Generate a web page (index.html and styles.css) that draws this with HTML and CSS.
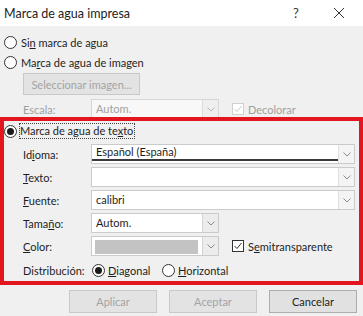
FILE: index.html
```html
<!DOCTYPE html>
<html lang="es">
<head>
    <meta charset="UTF-8">
    <title>Marca de agua impresa</title>
    <link rel="stylesheet" href="styles.css">
</head>
<body>
    <div class="dialog">
        <div class="titlebar">
            <span class="title">Marca de agua impresa</span>
            <span class="help">?</span>
            <span class="close">
                <svg width="12" height="12" viewBox="0 0 12 12"><path d="M1 1 L11 11 M11 1 L1 11" stroke="#333" stroke-width="1" fill="none"/></svg>
            </span>
        </div>

        <div class="content">
            <div class="radio-row first">
                <span class="radio"></span>
                <span>Si<u>n</u> marca de agua</span>
            </div>
            <div class="radio-row">
                <span class="radio"></span>
                <span>Ma<u>r</u>ca de agua de imagen</span>
            </div>
            <div class="image-row">
                <button class="btn btn-select" disabled>Seleccionar imagen...</button>
            </div>
            <div class="field-row scale-row">
                <span class="label disabled">Escala:</span>
                <div class="combo small disabled">
                    <span class="value">Autom.</span>
                    <span class="arrow"><svg width="8" height="5" viewBox="0 0 8 5"><path d="M0.5 0.5 L4 4 L7.5 0.5" stroke="#b5b5b5" fill="none"/></svg></span>
                </div>
                <span class="checkbox disabled">
                    <svg width="10" height="10" viewBox="0 0 10 10"><path d="M1.5 5 L4 7.5 L8.5 2" stroke="#c8c8c8" fill="none"/></svg>
                </span>
                <span class="check-text disabled">Decolorar</span>
            </div>

            <div class="text-section">
                <div class="radio-row text-option">
                    <span class="radio checked"></span>
                    <span class="focus">Marca de agua de te<u>x</u>to</span>
                </div>
                <div class="field-row">
                    <span class="label">Id<u>i</u>oma:</span>
                    <div class="combo wide focused">
                        <span class="value">Español (España)</span>
                        <span class="arrow"><svg width="8" height="5" viewBox="0 0 8 5"><path d="M0.5 0.5 L4 4 L7.5 0.5" stroke="#8a8a8a" fill="none"/></svg></span>
                    </div>
                </div>
                <div class="field-row">
                    <span class="label"><u>T</u>exto:</span>
                    <div class="combo wide">
                        <span class="value"></span>
                        <span class="arrow"><svg width="8" height="5" viewBox="0 0 8 5"><path d="M0.5 0.5 L4 4 L7.5 0.5" stroke="#8a8a8a" fill="none"/></svg></span>
                    </div>
                </div>
                <div class="field-row">
                    <span class="label"><u>F</u>uente:</span>
                    <div class="combo wide">
                        <span class="value">calibri</span>
                        <span class="arrow"><svg width="8" height="5" viewBox="0 0 8 5"><path d="M0.5 0.5 L4 4 L7.5 0.5" stroke="#8a8a8a" fill="none"/></svg></span>
                    </div>
                </div>
                <div class="field-row">
                    <span class="label">Tama<u>ñ</u>o:</span>
                    <div class="combo small">
                        <span class="value">Autom.</span>
                        <span class="arrow"><svg width="8" height="5" viewBox="0 0 8 5"><path d="M0.5 0.5 L4 4 L7.5 0.5" stroke="#8a8a8a" fill="none"/></svg></span>
                    </div>
                </div>
                <div class="field-row">
                    <span class="label"><u>C</u>olor:</span>
                    <div class="combo small color">
                        <span class="value"><span class="swatch"></span></span>
                        <span class="arrow"><svg width="8" height="5" viewBox="0 0 8 5"><path d="M0.5 0.5 L4 4 L7.5 0.5" stroke="#8a8a8a" fill="none"/></svg></span>
                    </div>
                    <span class="checkbox">
                        <svg width="10" height="10" viewBox="0 0 10 10"><path d="M1.5 5 L4 7.5 L8.5 2" stroke="#333" fill="none"/></svg>
                    </span>
                    <span class="check-text">S<u>e</u>mitransparente</span>
                </div>
                <div class="field-row layout-row">
                    <span class="label">Distribución:</span>
                    <span class="layout-option diagonal">
                        <span class="radio checked"></span>
                        <span><u>D</u>iagonal</span>
                    </span>
                    <span class="layout-option">
                        <span class="radio"></span>
                        <span><u>H</u>orizontal</span>
                    </span>
                </div>
            </div>

            <div class="buttons">
                <button class="btn" disabled>Aplicar</button>
                <button class="btn" disabled>Aceptar</button>
                <button class="btn">Cancelar</button>
            </div>
        </div>

        <!-- red annotation frame drawn over the dialog -->
        <div class="highlight"></div>
    </div>
</body>
</html>
```

FILE: styles.css
```css
* {
    box-sizing: border-box;
}

body {
    margin: 0;
    font-family: Lato, "Noto Sans", sans-serif;
    font-size: 11px;
    color: #1e1e1e;
    background: #f0f0f0;
}

.dialog {
    position: relative;
    width: 363px;
    height: 316px;
    background: #f0f0f0;
    overflow: hidden;
}

/* Title bar */
.titlebar {
    height: 26px;
    background: #fff;
    display: flex;
    align-items: center;
    padding-left: 4px;
    padding-right: 12px;
}

.title {
    flex: 1;
    font-size: 12.5px;
    color: #222;
}

.help {
    width: 20px;
    text-align: center;
    font-size: 13px;
    color: #333;
}

.close {
    width: 24px;
    margin-left: 21px;
    display: flex;
    justify-content: center;
    align-items: center;
}

/* Body */
.content {
    padding-left: 4px;
}

.radio-row {
    height: 20px;
    display: flex;
    align-items: center;
}

.radio-row.first {
    margin-top: 6px;
}

.radio {
    width: 13px;
    height: 13px;
    border: 1px solid #333;
    border-radius: 50%;
    background: #fff;
    margin-right: 4px;
    flex-shrink: 0;
    display: flex;
    justify-content: center;
    align-items: center;
}

.radio.checked::after {
    content: "";
    width: 7px;
    height: 7px;
    border-radius: 50%;
    background: #1a1a1a;
}

.image-row {
    margin-top: 1px;
    padding-left: 19px;
}

.btn {
    font-family: inherit;
    font-size: 11px;
    height: 23px;
    width: 88px;
    padding: 0;
    background: #e1e1e1;
    border: 1px solid #adadad;
    color: #1e1e1e;
}

.btn:disabled {
    background: #e3e3e3;
    border-color: #c9c9c9;
    color: #a3a3a3;
}

.btn-select {
    width: 117px;
    height: 22px;
}

.field-row {
    height: 20px;
    display: flex;
    align-items: center;
    margin-top: 3px;
}

.scale-row {
    margin-top: 4px;
}

.label {
    width: 87px;
    padding-left: 19px;
    flex-shrink: 0;
    white-space: nowrap;
}

.disabled {
    color: #a0a0a0;
}

/* Combo boxes */
.combo {
    height: 20px;
    display: flex;
    background: #fff;
    border: 1px solid #cbcbcb;
}

.combo.small {
    width: 128px;
}

.combo.wide {
    width: 264px;
}

.combo .value {
    flex: 1;
    padding-left: 4px;
    line-height: 18px;
    white-space: nowrap;
}

.combo .arrow {
    width: 16px;
    border-left: 1px solid #d4d4d4;
    background: #ececec;
    display: flex;
    justify-content: center;
    align-items: center;
}

.combo.wide .arrow {
    background: #f4f4f4;
    border-left-color: #e0e0e0;
}

.combo.focused .value {
    border-bottom: 2px solid #3a3a3a;
    margin-bottom: 2px;
    line-height: 14px;
}

.combo.disabled {
    background: #f8f8f8;
    border-color: #d6d6d6;
}

.combo.disabled .arrow {
    background: #efefef;
    border-left-color: #dcdcdc;
}

.combo.color .value {
    padding: 3px 4px 1px 3px;
}

.swatch {
    display: block;
    height: 100%;
    background: #c3c3c3;
}

/* Check boxes */
.checkbox {
    width: 12px;
    height: 12px;
    margin-left: 13px;
    margin-right: 4px;
    border: 1px solid #333;
    background: #fff;
    display: flex;
    justify-content: center;
    align-items: center;
}

.checkbox.disabled {
    border-color: #d0d0d0;
}

/* Text watermark section */
.text-section {
    margin-top: 2px;
}

.focus {
    outline: 1px dotted #444;
    outline-offset: 0;
    padding: 0 1px 1px 0;
    margin-left: -1px;
    line-height: 13px;
}

.field-row.layout-row {
    margin-top: 4px;
}

.layout-option {
    display: flex;
    align-items: center;
}

.layout-option .radio {
    margin-right: 3px;
}

.layout-option.diagonal {
    width: 71px;
    padding-left: 1px;
}

/* Bottom buttons */
.buttons {
    margin-top: 10px;
    display: flex;
    justify-content: flex-end;
    gap: 12px;
    padding-right: 6px;
}

/* Annotation frame */
.highlight {
    position: absolute;
    top: 117px;
    left: 0;
    width: 363px;
    height: 168px;
    border: 4px solid #e3161f;
    pointer-events: none;
}
```
